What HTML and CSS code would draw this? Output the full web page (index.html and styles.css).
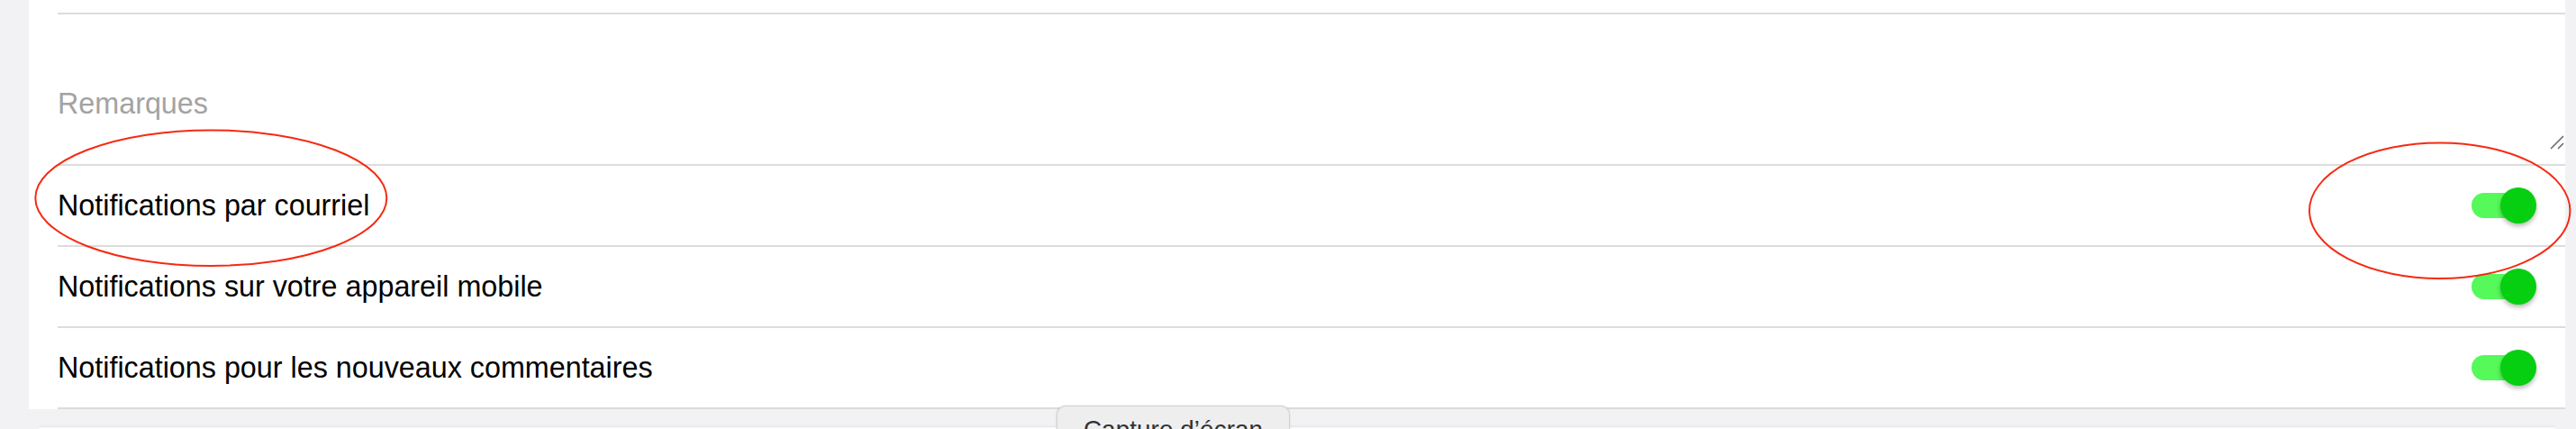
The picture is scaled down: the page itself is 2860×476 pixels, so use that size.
FILE: index.html
```html
<!DOCTYPE html>
<html lang="fr">
<head>
<meta charset="utf-8">
<title>Paramètres</title>
<link rel="stylesheet" href="styles.css">
</head>
<body>
<div class="panel">
  <div class="row-top"></div>
  <div class="notes">
    <textarea class="notes-input" placeholder="Remarques"></textarea>
    <svg class="grip" width="16" height="16" viewBox="0 0 16 16"><path d="M1 15 L15 1 M9 15 L15 9" stroke="#6b6b6b" stroke-width="1.6" fill="none"/></svg>
  </div>
  <div class="row">
    <span class="label">Notifications par courriel</span>
    <span class="switch"><span class="track"></span><span class="knob"></span></span>
  </div>
  <div class="row">
    <span class="label">Notifications sur votre appareil mobile</span>
    <span class="switch"><span class="track"></span><span class="knob"></span></span>
  </div>
  <div class="row">
    <span class="label">Notifications pour les nouveaux commentaires</span>
    <span class="switch"><span class="track"></span><span class="knob"></span></span>
  </div>
</div>
<div class="next-card"></div>
<div class="tab">Capture d’écran</div>
<svg class="marks" width="2860" height="476" viewBox="0 0 2860 476">
  <ellipse cx="234.3" cy="219.7" rx="195" ry="75.3" fill="none" stroke="#f52a12" stroke-width="2"/>
  <ellipse cx="2708.7" cy="233.7" rx="144.7" ry="75.3" fill="none" stroke="#f52a12" stroke-width="2"/>
</svg>
</body>
</html>
```

FILE: styles.css
```css
html, body {
  margin: 0;
  padding: 0;
}
body {
  background: #f2f2f4;
  width: 2860px;
  height: 476px;
  overflow: hidden;
  position: relative;
  font-family: "Liberation Sans", Arial, sans-serif;
}
.panel {
  margin-left: 32px;
  width: 2816px;
  background: #ffffff;
  display: flex;
  flex-direction: column;
}
.row-top {
  height: 14px;
  margin-left: 32px;
  border-bottom: 2px solid #dcdcdc;
}
.notes {
  position: relative;
  margin-left: 32px;
  height: 166px;
  border-bottom: 2px solid #dcdcdc;
  display: flex;
}
.notes-input {
  flex: 1;
  border: none;
  outline: none;
  resize: none;
  margin: 0;
  padding: 81px 0 0 0;
  font-family: "Liberation Sans", Arial, sans-serif;
  font-size: 32.3px;
  line-height: 37px;
  color: #000;
  background: transparent;
}
.notes-input::placeholder {
  color: #a3a3a3;
}
.grip {
  position: absolute;
  left: 2767px;
  top: 134px;
}
.row {
  margin-left: 32px;
  height: 88px;
  border-bottom: 2px solid #dcdcdc;
  display: flex;
  align-items: center;
  justify-content: space-between;
  padding-right: 32px;
}
.label {
  font-size: 32.3px;
  color: #000;
  line-height: 37px;
}
.switch {
  position: relative;
  width: 72px;
  height: 40px;
  display: flex;
  align-items: center;
}
.track {
  width: 62px;
  height: 28px;
  border-radius: 14px;
  background: #55f95a;
}
.knob {
  position: absolute;
  right: 0;
  top: 0;
  width: 40px;
  height: 40px;
  border-radius: 50%;
  background: #05cf10;
  box-shadow: 0 3px 5px rgba(0, 0, 0, 0.28);
}
.next-card {
  margin: 20px 0 0 43px;
  width: 2794px;
  height: 2px;
  background: #fbfbfc;
  border-radius: 2px 2px 0 0;
  box-shadow: 0 -1px 3px rgba(0, 0, 0, 0.08);
}
.tab {
  position: absolute;
  left: 1173px;
  top: 450px;
  width: 259px;
  height: 26px;
  overflow: hidden;
  box-sizing: border-box;
  padding-top: 10px;
  text-align: center;
  background: #eeeeee;
  border: 1px solid #d2d2d2;
  border-bottom: none;
  border-radius: 10px 10px 0 0;
  box-shadow: 0 0 3px rgba(0, 0, 0, 0.12);
  font-size: 28px;
  line-height: 32px;
  color: #333333;
}
.marks {
  position: absolute;
  left: 0;
  top: 0;
  pointer-events: none;
}
```
